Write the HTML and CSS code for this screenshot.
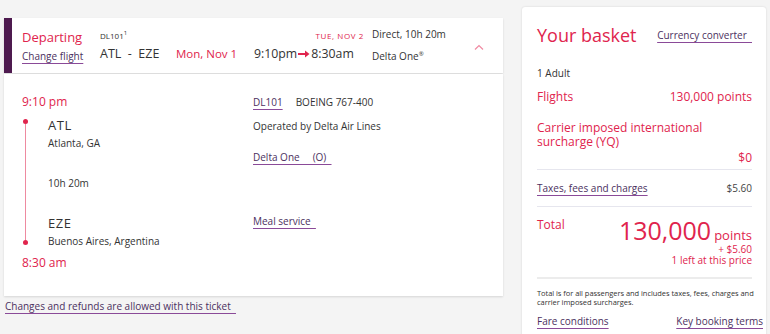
FILE: index.html
```html
<!DOCTYPE html>
<html lang="en">
<head>
<meta charset="utf-8">
<title>Flight details</title>
<link rel="stylesheet" href="styles.css">
</head>
<body>
<div class="page">
  <div class="left">
    <div class="flight-head">
      <div class="hc1">
        <div class="departing">Departing</div>
        <a class="link change">Change flight</a>
      </div>
      <div class="hc2">
        <div class="hrow top">
          <span class="fno">DL101<sup>1</sup></span>
          <span class="arrdate">TUE, NOV 2</span>
        </div>
        <div class="hrow bottom">
          <span class="route">ATL&nbsp;&nbsp;-&nbsp;&nbsp;EZE</span>
          <span class="date">Mon, Nov 1</span>
          <span class="times">9:10pm<svg class="arrow" width="12" height="8" viewBox="0 0 12 8"><path d="M0 4H8" stroke="#e0244d" stroke-width="2"/><path d="M7 0.5L11.5 4L7 7.5Z" fill="#e0244d"/></svg>8:30am</span>
        </div>
      </div>
      <div class="hc3">
        <div class="direct">Direct, 10h 20m</div>
        <div class="cabin">Delta One<sup>®</sup></div>
      </div>
      <div class="hc4">
        <svg width="10" height="6" viewBox="0 0 10 6"><path d="M1 5.5L5 1.5L9 5.5" fill="none" stroke="#f08aa2" stroke-width="1.2"/></svg>
      </div>
    </div>
    <div class="flight-body">
      <div class="itin">
        <div class="time">9:10 pm</div>
        <div class="legs">
          <div class="track"><span class="dot"></span><span class="line"></span><span class="dot"></span></div>
          <div class="stops">
            <div class="code">ATL</div>
            <div class="city">Atlanta, GA</div>
            <div class="dur">10h 20m</div>
            <div class="code eze">EZE</div>
            <div class="city">Buenos Aires, Argentina</div>
          </div>
        </div>
        <div class="time arr">8:30 am</div>
      </div>
      <div class="info">
        <div class="irow"><a class="link dl">DL101</a><span class="plane">BOEING 767-400</span></div>
        <div class="op">Operated by Delta Air Lines</div>
        <a class="link fare">Delta One&nbsp;&nbsp;&nbsp;&nbsp;&nbsp;(O)&nbsp;&nbsp;</a>
        <a class="link meal">Meal service&nbsp;&nbsp;</a>
      </div>
    </div>
    <a class="link changes">Changes and refunds are allowed with this ticket&nbsp;&nbsp;</a>
  </div>
  <div class="basket">
    <div class="bhead">
      <h2>Your basket</h2>
      <a class="link conv">Currency converter&nbsp;&nbsp;</a>
    </div>
    <div class="pax">1 Adult</div>
    <div class="brow red"><span>Flights</span><span>130,000 points</span></div>
    <div class="surch red">Carrier imposed international surcharge (YQ)</div>
    <div class="zero red">$0</div>
    <div class="brow taxes"><a class="link">Taxes, fees and charges</a><span>$5.60</span></div>
    <div class="total">
      <div class="tl red">Total</div>
      <div class="tr red">
        <div class="amount"><span class="big">130,000</span> <span class="pts">points</span></div>
        <div class="small"><span>+ $5.60</span></div>
        <div class="small"><span>1 left at this price</span></div>
      </div>
    </div>
    <p class="note">Total is for all passengers and includes taxes, fees, charges and carrier imposed surcharges.</p>
    <div class="foot"><a class="link">Fare conditions</a><a class="link">Key booking terms</a></div>
  </div>
</div>
</body>
</html>
```
FILE: styles.css
```css
html, body {
  margin: 0;
  padding: 0;
  background: #f4f4f4;
  font-family: "Open Sans", "Liberation Sans", sans-serif;
  color: #333;
}
.page {
  display: flex;
  align-items: flex-start;
  padding: 7px 0 0 4px;
  gap: 19px;
  height: 327px;
  overflow: hidden;
}
.red { color: #e0244d; }
.link {
  color: #4b3060;
  text-decoration: underline;
  text-decoration-color: #8a4a98;
  text-underline-offset: 3px;
  text-decoration-thickness: 1px;
}
.left {
  width: 499px;
  margin-top: 11px;
  display: flex;
  flex-direction: column;
}
.flight-head {
  height: 55px;
  background: #fff;
  border-left: 8px solid #4e1a4f;
  box-shadow: 0 1px 2px rgba(0,0,0,0.12);
  display: flex;
  align-items: center;
  box-sizing: border-box;
}
.hc1 {
  width: 88px;
  padding-left: 10px;
  box-sizing: border-box;
  display: flex;
  flex-direction: column;
  gap: 4px;
}
.departing {
  color: #e0244d;
  font-size: 13px;
  line-height: 16px;
}
.change { font-size: 10px; line-height: 14px; }
.hc2 {
  width: 264px;
  display: flex;
  flex-direction: column;
  gap: 3px;
}
.hrow { display: flex; align-items: baseline; }
.hrow.top { justify-content: space-between; height: 14px; align-items: center; }
.fno { font-size: 8px; color: #333; }
.fno sup { font-size: 6px; }
.arrdate {
  font-size: 8px;
  letter-spacing: 0.6px;
  color: #e0244d;
}
.hrow.bottom { font-size: 12px; line-height: 18px; }
.route { width: 76px; font-size: 12.5px; }
.date { color: #e0244d; width: 78px; font-size: 11.5px; }
.times { display: flex; align-items: center; font-size: 12.3px; }
.arrow { margin: 0 1px; }
.hc3 {
  padding-left: 8px;
  width: 100px;
  display: flex;
  flex-direction: column;
  gap: 6px;
}
.direct { font-size: 10px; line-height: 14px; }
.cabin { font-size: 10px; line-height: 14px; }
.cabin sup { font-size: 6px; }
.hc4 { padding-left: 2px; padding-bottom: 4px; }
.flight-body {
  margin-top: 1px;
  height: 222px;
  background: #fff;
  box-shadow: 0 1px 2px rgba(0,0,0,0.12);
  display: flex;
  padding: 20px 0 0 18px;
  box-sizing: border-box;
}
.itin { width: 231px; }
.time { font-size: 12px; line-height: 16px; color: #e0244d; }
.legs { display: flex; margin-top: 3px; }
.track {
  width: 26px;
  display: flex;
  flex-direction: column;
  align-items: flex-start;
  padding: 6px 0 3px 1px;
  box-sizing: border-box;
}
.dot {
  width: 5px;
  height: 5px;
  border-radius: 50%;
  background: #e0244d;
}
.line {
  width: 1px;
  margin-left: 2px;
  flex: 1;
  background: #ee8aa0;
}
.stops { padding-top: 4px; }
.code { font-size: 13px; line-height: 16px; letter-spacing: 0.5px; }
.city { font-size: 10px; line-height: 14px; margin-top: 3px; }
.dur { font-size: 10px; line-height: 14px; margin-top: 26px; }
.code.eze { margin-top: 25px; }
.time.arr { margin-top: 7px; }
.info {
  display: flex;
  flex-direction: column;
  align-items: flex-start;
  font-size: 10px;
  line-height: 14px;
  padding-top: 1px;
}
.irow { display: flex; gap: 13px; }
.plane { font-size: 10px; }
.op { margin-top: 10px; }
.fare { margin-top: 17px; }
.meal { margin-top: 50px; }
.changes {
  font-size: 10px;
  line-height: 14px;
  margin-top: 3px;
  margin-left: 1px;
  align-self: flex-start;
}
.basket {
  width: 244px;
  height: 340px;
  background: #fff;
  border-radius: 3px;
  box-shadow: 0 0 2px rgba(0,0,0,0.15);
  padding: 16px 14px 0 15px;
  box-sizing: border-box;
}
.bhead {
  display: flex;
  justify-content: space-between;
  align-items: center;
}
.bhead h2 {
  margin: 0;
  font-weight: 400;
  font-size: 18px;
  line-height: 24px;
  color: #e0244d;
}
.conv { font-size: 10px; }
.pax { font-size: 10px; margin-top: 19px; line-height: 14px; }
.brow {
  display: flex;
  justify-content: space-between;
  align-items: baseline;
}
.brow.red { font-size: 12px; line-height: 16px; margin-top: 9px; }
.surch { font-size: 12px; line-height: 14px; margin-top: 16px; padding-right: 40px; }
.zero {
  text-align: right;
  font-size: 12px;
  line-height: 16px;
  margin-top: 1px;
  padding-bottom: 3px;
  border-bottom: 1px solid #e6e6ee;
}
.taxes {
  font-size: 10px;
  line-height: 14px;
  padding: 11px 0 11px;
  border-bottom: 1px solid #e6e6ee;
}
.taxes span { color: #444; }
.total {
  display: flex;
  justify-content: space-between;
  padding: 10px 0 11px;
  border-bottom: 2px solid #ececec;
}
.tl { font-size: 12px; line-height: 16px; }
.tr {
  display: flex;
  flex-direction: column;
  align-items: flex-end;
}
.amount {
  display: flex;
  align-items: baseline;
  gap: 3px;
  height: 27px;
}
.big { display: inline-block; font-size: 25px; line-height: 27px; height: 27px; }
.pts { display: inline-block; font-size: 13px; line-height: 12px; height: 12px; }
.small { font-size: 10px; line-height: 11px; height: 11px; }
.small span { display: inline-block; line-height: 11px; height: 11px; }
.note {
  font-size: 7.5px;
  line-height: 9px;
  letter-spacing: -0.05px;
  margin: 10px -10px 0 0;
}
.foot {
  display: flex;
  justify-content: space-between;
  margin-right: -11px;
  margin-top: 7px;
  font-size: 10px;
  line-height: 14px;
}
```
